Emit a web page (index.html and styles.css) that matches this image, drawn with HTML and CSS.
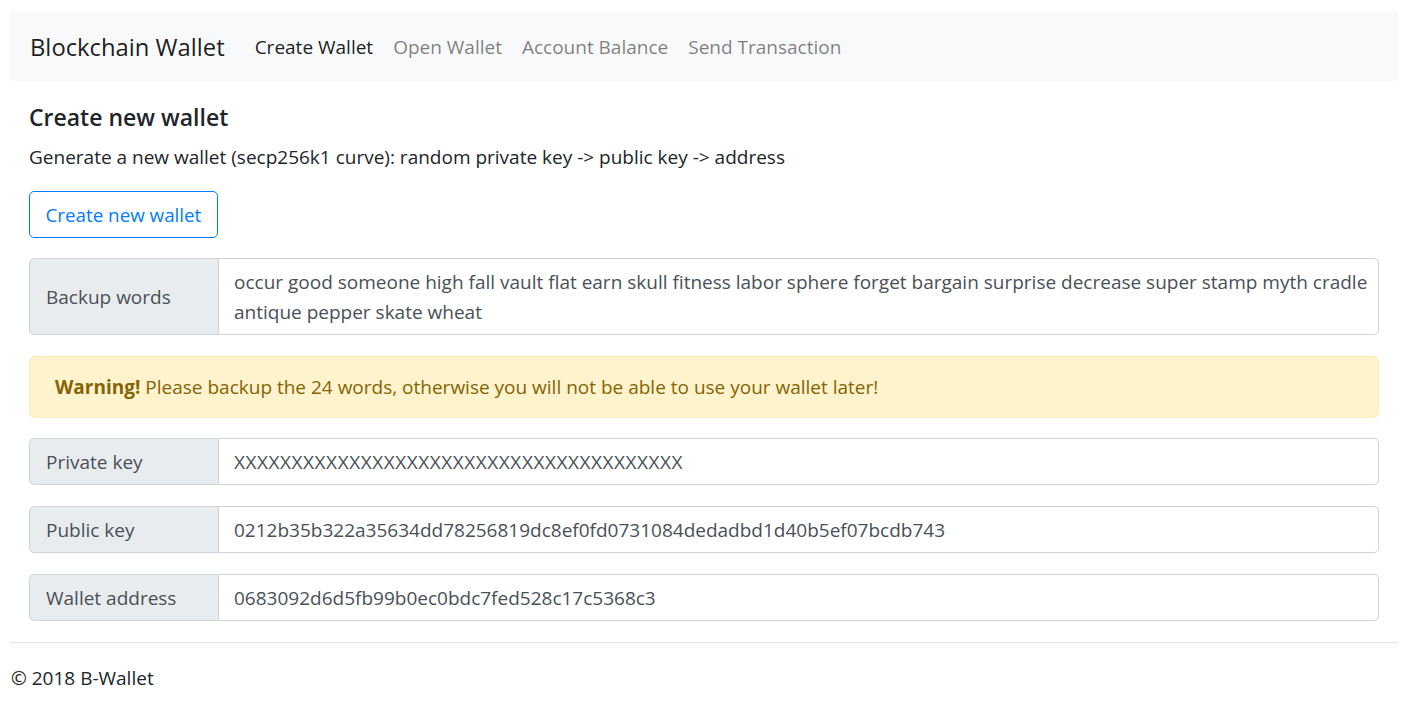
FILE: index.html
```html
<!DOCTYPE html>
<html lang="en">
<head>
<meta charset="utf-8">
<title>Blockchain Wallet</title>
<link rel="stylesheet" href="styles.css">
</head>
<body>
<div class="page">
  <nav class="navbar">
    <span class="brand">Blockchain Wallet</span>
    <ul class="nav">
      <li><a class="nav-link active" href="#">Create Wallet</a></li>
      <li><a class="nav-link" href="#">Open Wallet</a></li>
      <li><a class="nav-link" href="#">Account Balance</a></li>
      <li><a class="nav-link" href="#">Send Transaction</a></li>
    </ul>
  </nav>
  <main class="content">
    <h5 class="title">Create new wallet</h5>
    <p class="intro">Generate a new wallet (secp256k1 curve): random private key -&gt; public key -&gt; address</p>
    <button class="btn-outline" type="button">Create new wallet</button>
    <div class="field">
      <span class="field-label">Backup words</span>
      <div class="field-value">
        <span class="line">occur good someone high fall vault flat earn skull fitness labor sphere forget bargain surprise decrease super stamp myth cradle</span>
        <span class="line">antique pepper skate wheat</span>
      </div>
    </div>
    <div class="alert"><strong>Warning!</strong> Please backup the 24 words, otherwise you will not be able to use your wallet later!</div>
    <div class="field">
      <span class="field-label">Private key</span>
      <div class="field-value masked">XXXXXXXXXXXXXXXXXXXXXXXXXXXXXXXXXXXXXXX</div>
    </div>
    <div class="field">
      <span class="field-label">Public key</span>
      <div class="field-value">0212b35b322a35634dd78256819dc8ef0fd0731084dedadbd1d40b5ef07bcdb743</div>
    </div>
    <div class="field">
      <span class="field-label">Wallet address</span>
      <div class="field-value">0683092d6d5fb99b0ec0bdc7fed528c17c5368c3</div>
    </div>
  </main>
  <hr class="divider">
  <footer class="footer">© 2018 B-Wallet</footer>
</div>
</body>
</html>
```

FILE: styles.css
```css
html, body {
  margin: 0;
  padding: 0;
}
body {
  font-family: "Open Sans", "Noto Sans", sans-serif;
  font-size: 19px;
  line-height: 30px;
  color: #212529;
  background: #fff;
}
.page {
  padding: 11px 12px 0 10px;
}
.navbar {
  display: flex;
  align-items: center;
  background: #f8f9fa;
  height: 70px;
  padding: 0 20px;
  box-sizing: border-box;
}
.brand {
  font-size: 23.8px;
  line-height: 37px;
  color: rgba(0,0,0,.9);
  margin-right: 20px;
  position: relative;
  top: 1px;
}
.nav {
  display: flex;
  list-style: none;
  margin: 0;
  padding: 0;
  font-size: 19px;
  position: relative;
  top: 1px;
}
.nav-link {
  display: block;
  padding: 0 10px;
  color: rgba(0,0,0,.5);
  text-decoration: none;
}
.nav-link.active {
  color: rgba(0,0,0,.9);
}
.content {
  padding: 21px 19px 0 19px;
}
.title {
  font-size: 23px;
  font-weight: 600;
  line-height: 30px;
  margin: 0 0 10px 0;
}
.intro {
  margin: 0 0 19px 0;
}
.btn-outline {
  display: block;
  font-family: inherit;
  font-size: 18.8px;
  line-height: 30px;
  color: #007bff;
  background: transparent;
  border: 1px solid #007bff;
  border-radius: 5px;
  padding: 7.5px 15.5px;
  white-space: nowrap;
  text-align: center;
  margin: 0 0 20px 0;
}
.field {
  display: flex;
  margin-bottom: 21px;
  color: #495057;
}
.field-label {
  display: flex;
  align-items: center;
  width: 190px;
  box-sizing: border-box;
  padding: 7.5px 16px;
  background: #e9ecef;
  border: 1px solid #ced4da;
  border-radius: 5px 0 0 5px;
  white-space: nowrap;
}
.field-value {
  flex: 1;
  padding: 7.5px 15px;
  border: 1px solid #ced4da;
  border-left: none;
  border-radius: 0 5px 5px 0;
  white-space: nowrap;
  overflow: hidden;
}
.masked {
  letter-spacing: 0.54px;
}
.line {
  display: block;
}
.alert {
  background: #fff3cd;
  border: 1px solid #ffeeba;
  color: #856404;
  border-radius: 5px;
  padding: 15px 25px;
  margin-bottom: 20px;
}
.alert strong {
  font-weight: 700;
}
.divider {
  border: 0;
  border-top: 1px solid rgba(0,0,0,.1);
  margin: 0 0 20px 0;
}
.footer {
  padding: 0 1px;
}
```
